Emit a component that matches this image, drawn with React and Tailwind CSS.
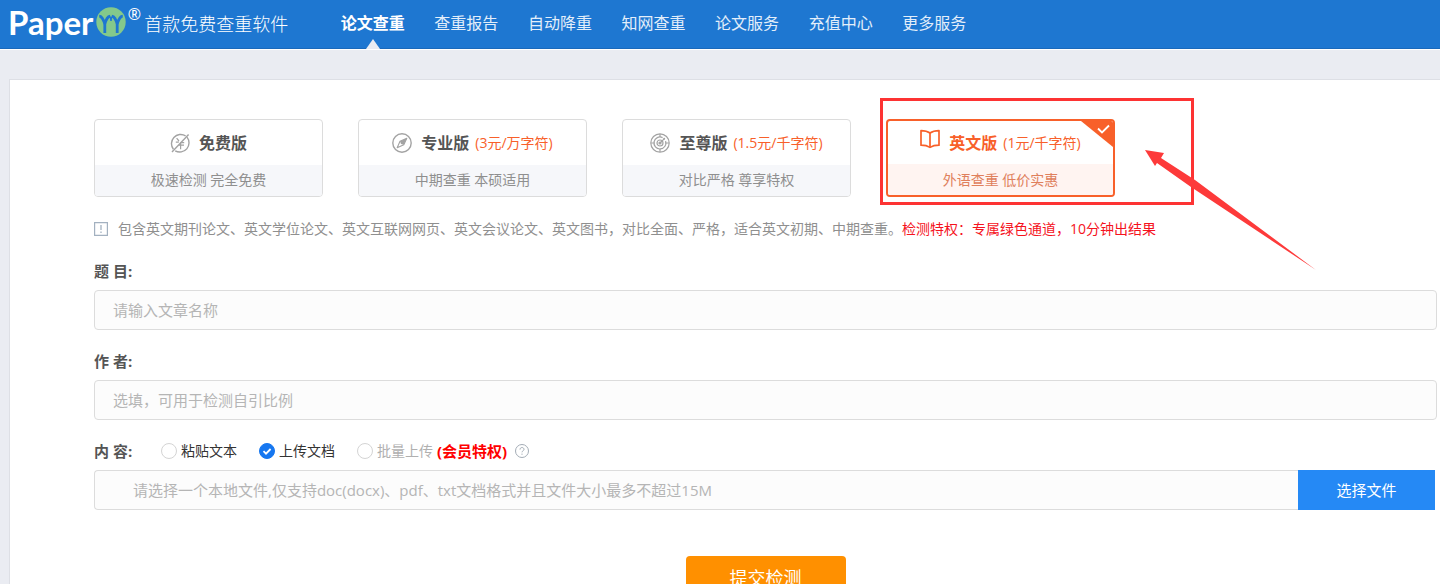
import React, { useState } from 'react';

const NAV = ['论文查重', '查重报告', '自动降重', '知网查重', '论文服务', '充值中心', '更多服务'];

const VERSIONS = [
  { id: 'free', name: '免费版', price: '', desc: '极速检测 完全免费', Icon: FreeIcon },
  { id: 'pro', name: '专业版', price: '(3元/万字符)', desc: '中期查重 本硕适用', Icon: CompassIcon },
  { id: 'vip', name: '至尊版', price: '(1.5元/千字符)', desc: '对比严格 尊享特权', Icon: TargetIcon },
  { id: 'en', name: '英文版', price: '(1元/千字符)', desc: '外语查重 低价实惠', Icon: BookIcon },
];

function FreeIcon() {
  return (
    <svg viewBox="0 0 20 20" className="h-5 w-5 text-[#a3a3a3]" fill="none" stroke="currentColor" strokeWidth="1.4">
      <path d="M15.6 2.9A9.2 9.2 0 0 0 3.4 16.3M5.2 17.8A9.2 9.2 0 0 0 17 4.1" />
      <path d="M2 19 18.6 1.6" />
      <path d="M6.6 5.2 9 8M5.8 9.2h3M10.6 9.6h3.6M8.8 12.2h5.2M10.6 9.6v6.6" strokeWidth="1.2" />
    </svg>
  );
}

function CompassIcon() {
  return (
    <svg viewBox="0 0 20 20" className="h-5 w-5 text-[#a3a3a3]" fill="none" stroke="currentColor" strokeWidth="1.4">
      <circle cx="10" cy="10" r="9.2" />
      <path d="M14.8 5.2 8 8.2 5.2 14.8 11.8 11.8Z" strokeWidth="1.1" strokeLinejoin="round" />
      <path d="M14.8 5.2 11.8 11.8 9 11 8 8.2Z" fill="currentColor" stroke="none" />
    </svg>
  );
}

function TargetIcon() {
  return (
    <svg viewBox="0 0 20 20" className="h-5 w-5 text-[#a3a3a3]" fill="none" stroke="currentColor" strokeWidth="1.2">
      <circle cx="10" cy="10" r="9.2" />
      <path d="M12.6 4.6A6 6 0 1 0 15.6 8" />
      <circle cx="10" cy="10" r="3" />
      <path d="M10 10 14.2 5.8M10 1v3M10 16v3M1 10h4M15 10h4" />
      <circle cx="10" cy="10" r="1" fill="currentColor" />
      <circle cx="14.2" cy="5.8" r="1" fill="currentColor" stroke="none" />
    </svg>
  );
}

function BookIcon() {
  return (
    <svg viewBox="0 0 20 20" className="mb-2 h-5 w-5 text-[#f8602a]" fill="none" stroke="currentColor" strokeWidth="1.7" strokeLinejoin="round">
      <path d="M10 4C7.500 2.200 4.500 1.600 1 1.600V16.200C4.500 16.200 7.500 16.800 10 18.400 12.500 16.800 15.500 16.200 19 16.200V1.600C15.500 1.600 12.500 2.200 10 4Z" />
      <path d="M10 4v14.200" />
    </svg>
  );
}

function Logo() {
  return (
    <a href="#" className="flex h-full items-center text-white">
      <span className="mb-1 font-['Lato',sans-serif] text-[33px] leading-none font-bold">Paper</span>
      <svg viewBox="0 0 30 30" className="mb-1 ml-[3px] h-[30px] w-[30px]">
        <circle cx="15" cy="15" r="14.700" fill="#84c98b" />
        <g fill="none" stroke="#1e77d1" strokeWidth="2.800" strokeLinejoin="round">
          <path d="M3.200 9.200C5.500 9.200 6.500 11 8.800 16.500 10.500 12 11.500 9.500 14.200 9.200" />
          <path d="M15.800 9.200C18.500 9.500 19.500 12 21.200 16.500 23.500 11 24.500 9.200 26.800 9.200" />
          <path d="M8.800 15.500V26M21.200 15.500V26" />
          <path d="M13.500 9.200C15 10.500 15 12 15 14M16.500 9.200C15 10.500 15 12 15 14" strokeWidth="1.500" />
        </g>
      </svg>
      <span className="mb-5 w-4 text-center text-base leading-none">®</span>
      <span className="ml-[2px] text-lg leading-none font-light">首款免费查重软件</span>
    </a>
  );
}

function Header() {
  return (
    <header className="border-b border-white bg-[#1e77d1]">
      <div className="flex h-[49px] items-center border-b border-[#1a69bb] pl-2">
        <div className="h-full w-[318px] shrink-0">
          <Logo />
        </div>
        <nav className="grid h-full w-[655px] grid-cols-7 pb-[2px]">
          {NAV.map((item, i) => (
            <a
              key={item}
              href="#"
              className={`relative flex items-center justify-center text-base whitespace-nowrap ${
                i === 0 ? 'font-bold text-white' : 'text-[#e3eefa]'
              }`}
            >
              {item}
              {i === 0 && (
                <svg viewBox="0 0 14 10" className="absolute -bottom-[3px] left-1/2 h-[10px] w-[14px] -translate-x-1/2">
                  <path d="M7 0 14 10H0Z" fill="#eaecf2" />
                </svg>
              )}
            </a>
          ))}
        </nav>
      </div>
    </header>
  );
}

function VersionCard({ version, selected, onSelect }) {
  const { name, price, desc, Icon } = version;
  return (
    <button
      type="button"
      onClick={onSelect}
      aria-pressed={selected}
      className={`relative flex h-[78px] w-[229px] flex-col overflow-hidden rounded ${
        selected ? 'border-2 border-[#f8602a]' : 'border border-[#dcdcdc]'
      }`}
    >
      <span className="flex w-full flex-1 items-center justify-center">
        <Icon />
        <span className={`ml-[9px] text-base font-bold ${selected ? 'text-[#f8602a]' : 'text-[#555]'}`}>{name}</span>
        {price && <span className="ml-[6px] text-sm text-[#f8602a]">{price}</span>}
      </span>
      <span
        className={`flex h-[31px] w-full items-center justify-center text-sm ${
          selected ? 'bg-[#fff4f1] text-[#e0805c]' : 'bg-[#f6f7fa] pb-[2px] text-[#8f8f8f]'
        }`}
      >
        {desc}
      </span>
      {selected && (
        <svg viewBox="0 0 32 26" className="absolute top-0 right-0 h-[26px] w-8">
          <path d="M0 0H32V26Z" fill="#f8602a" />
          <path d="M17 7.500 21 11.500 28 4.500" fill="none" stroke="#fff" strokeWidth="1.800" />
        </svg>
      )}
    </button>
  );
}

// red frame and arrow that point at the English version
function Highlight() {
  return (
    <>
      <div className="pointer-events-none absolute -top-[21px] -left-[6px] h-[107px] w-[314px] border-3 border-[#fd3333]" />
      <svg viewBox="0 0 171 121" className="pointer-events-none absolute top-[31px] left-[259px] h-[121px] w-[171px]">
        <path d="M0 0 19 3 16 8 50 30 171 120 46 37 12 13 10 16Z" fill="#fd3a3a" />
      </svg>
    </>
  );
}

function Radio({ id, checked, onChange, children, muted }) {
  return (
    <span className="flex items-center">
      <span className="relative mr-1 flex">
        <input
          id={id}
          type="radio"
          name="source"
          checked={checked}
          onChange={onChange}
          className="h-4 w-4 appearance-none rounded-full border border-[#d4d4d4] bg-white checked:border-[#1677f0] checked:bg-[#1677f0]"
        />
        {checked && (
          <svg viewBox="0 0 16 16" className="pointer-events-none absolute inset-0 h-4 w-4">
            <path d="M4.500 8.200 7 10.700 11.600 6" fill="none" stroke="#fff" strokeWidth="1.800" />
          </svg>
        )}
      </span>
      <label htmlFor={id} className={`text-sm ${muted ? 'text-[#b0b0b0]' : 'text-[#333]'}`}>
        {children}
      </label>
    </span>
  );
}

function TextField({ id, label, placeholder }) {
  return (
    <div>
      <label htmlFor={id} className="mt-5 mb-2 block text-[15px] leading-[22px] font-bold text-[#555]">
        {label}
      </label>
      <input
        id={id}
        type="text"
        placeholder={placeholder}
        className="block h-10 w-full rounded border border-[#dcdcdc] bg-[#fcfcfc] px-[18px] text-[15px] placeholder:text-[#b5b5b5] focus:outline-none"
      />
    </div>
  );
}

export default function App() {
  const [version, setVersion] = useState('en');
  const [source, setSource] = useState('upload');

  return (
    <div className="flex min-h-screen flex-col bg-[#eaecf2] font-['Open_Sans','Noto_Sans_CJK_SC',sans-serif]">
      <Header />

      <main className="mt-[29px] ml-[9px] flex-1 border-t border-l border-[#dddfe5] bg-white pt-[39px] pr-[3px] pb-10 pl-[84px]">
        <div className="flex gap-[35px]">
          {VERSIONS.map((v) => (
            <div key={v.id} className="relative">
              <VersionCard version={v} selected={version === v.id} onSelect={() => setVersion(v.id)} />
              {v.id === 'en' && <Highlight />}
            </div>
          ))}
        </div>

        <p className="mt-[21px] flex items-center text-sm leading-[22px] whitespace-nowrap text-[#8f8f8f]">
          <svg viewBox="0 0 14 14" className="mr-[10px] h-[14px] w-[14px]" fill="none" stroke="#a3b1c0">
            <path d="M.5.5h13v13H.5Z" strokeWidth="1.400" />
            <path d="M7 3v5M7 9.500v1.500" strokeWidth="1.300" />
          </svg>
          包含英文期刊论文、英文学位论文、英文互联网网页、英文会议论文、英文图书，对比全面、严格，适合英文初期、中期查重。
          <span className="text-[#f5121d]">检测特权：专属绿色通道，10分钟出结果</span>
        </p>

        <form onSubmit={(e) => e.preventDefault()}>
          <TextField id="title" label="题 目:" placeholder="请输入文章名称" />
          <TextField id="author" label="作 者:" placeholder="选填，可用于检测自引比例" />

          <div className="mt-5 mb-2 flex h-[22px] items-center gap-[22px]">
            <label htmlFor="file" className="w-[45px] text-[15px] font-bold text-[#555]">
              内 容:
            </label>
            <Radio id="paste" checked={source === 'paste'} onChange={() => setSource('paste')}>
              粘贴文本
            </Radio>
            <Radio id="upload" checked={source === 'upload'} onChange={() => setSource('upload')}>
              上传文档
            </Radio>
            <div className="flex items-center">
              <Radio id="batch" checked={source === 'batch'} onChange={() => setSource('batch')} muted>
                批量上传
              </Radio>
              <span className="ml-1 text-[15px] font-bold text-[#f00]">(会员特权)</span>
              <svg viewBox="0 0 14 14" className="ml-2 h-[14px] w-[14px]" fill="none" stroke="#a3acb5">
                <circle cx="7" cy="7" r="6.500" />
                <path d="M5 5.600C5 4.300 5.900 3.500 7 3.500S9 4.300 9 5.400C9 6.700 7 6.800 7 8.300M7 9.600v1.200" />
              </svg>
            </div>
          </div>

          <div className="mr-[2px] flex">
            <input
              id="file"
              type="text"
              readOnly
              placeholder="请选择一个本地文件,仅支持doc(docx)、pdf、txt文档格式并且文件大小最多不超过15M"
              className="h-10 min-w-0 flex-1 rounded-l border border-r-0 border-[#dcdcdc] bg-[#fcfcfc] px-[38px] text-[15px] placeholder:text-[#b5b5b5] focus:outline-none"
            />
            <button type="button" className="h-10 w-[137px] bg-[#2589f5] text-[15px] text-white">
              选择文件
            </button>
          </div>

          <button
            type="submit"
            className="mx-auto mt-[46px] block h-11 w-40 rounded bg-[#ff9000] text-lg leading-none text-white"
          >
            提交检测
          </button>
        </form>
      </main>
    </div>
  );
}
